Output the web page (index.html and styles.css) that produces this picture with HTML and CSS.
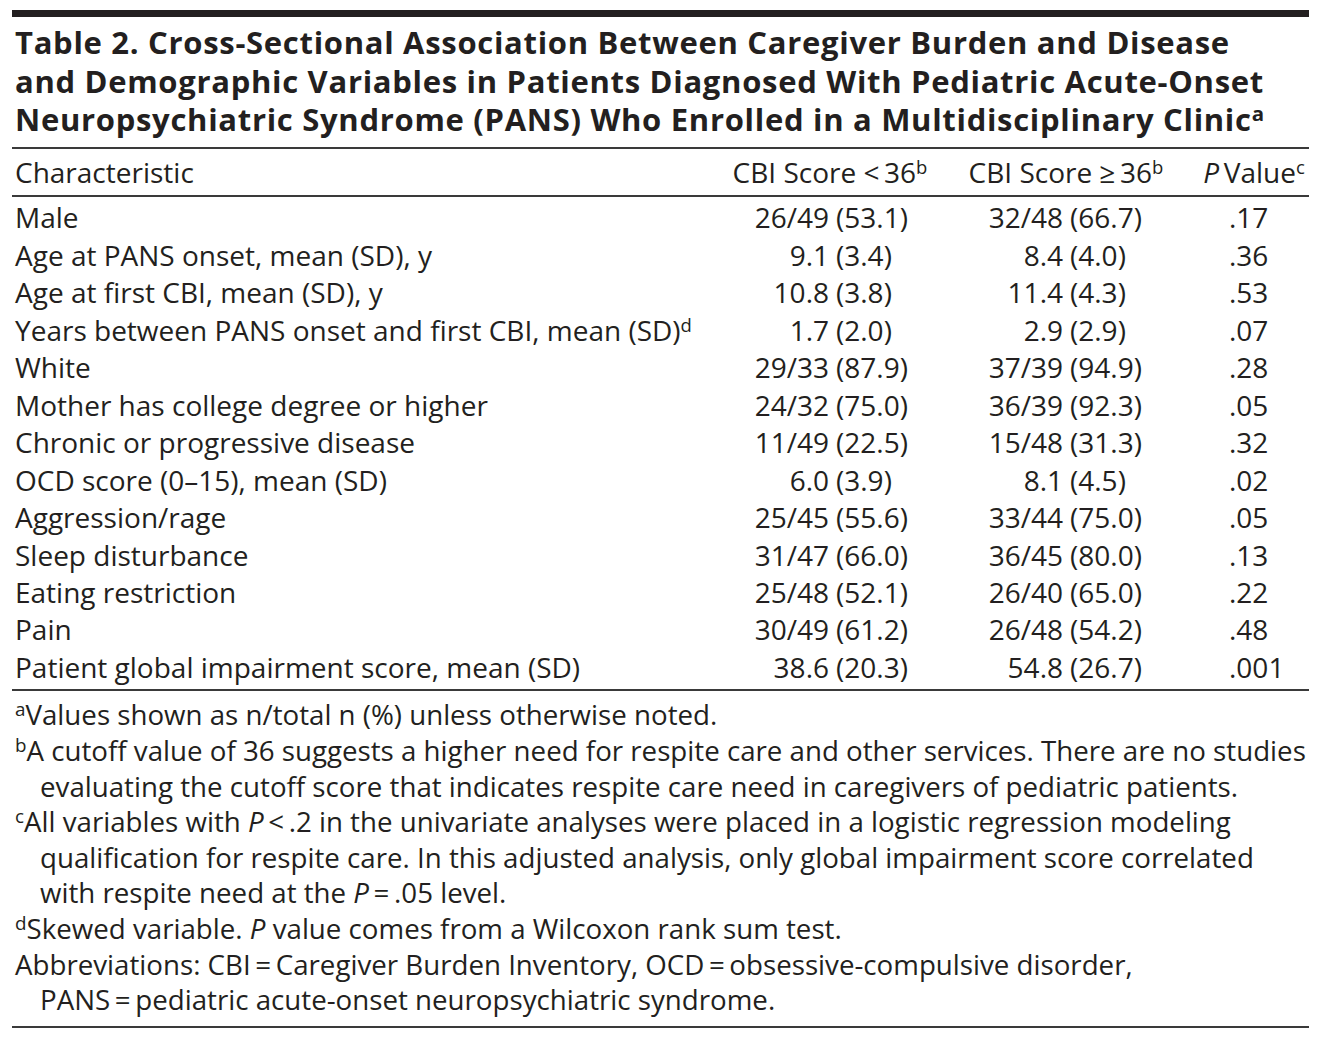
FILE: index.html
```html
<!DOCTYPE html>
<html lang="en">
<head>
<meta charset="utf-8">
<title>Table 2</title>
<link rel="stylesheet" href="styles.css">
</head>
<body>
<div class="sheet">
  <div class="topbar"></div>
  <h1 class="title">Table 2. Cross-Sectional Association Between Caregiver Burden and Disease<br>and Demographic Variables in Patients Diagnosed With Pediatric Acute-Onset<br>Neuropsychiatric Syndrome (PANS) Who Enrolled in a Multidisciplinary Clinic<sup>a</sup></h1>
  <div class="rule"></div>
  <div class="row head">
    <div class="c1">Characteristic</div>
    <div class="h2">CBI Score &lt;&#8201;36<sup>b</sup></div>
    <div class="h3">CBI Score &#8805;&#8201;36<sup>b</sup></div>
    <div class="h4"><i>P</i>&#8201;Value<sup>c</sup></div>
  </div>
  <div class="rule"></div>
  <div class="body">
    <div class="row"><div class="c1">Male</div><div class="a">26/49</div><div class="b">(53.1)</div><div class="a3">32/48</div><div class="b3">(66.7)</div><div class="p">.17</div></div>
    <div class="row"><div class="c1">Age at PANS onset, mean (SD), y</div><div class="a">9.1</div><div class="b">(3.4)</div><div class="a3">8.4</div><div class="b3">(4.0)</div><div class="p">.36</div></div>
    <div class="row"><div class="c1">Age at first CBI, mean (SD), y</div><div class="a">10.8</div><div class="b">(3.8)</div><div class="a3">11.4</div><div class="b3">(4.3)</div><div class="p">.53</div></div>
    <div class="row"><div class="c1">Years between PANS onset and first CBI, mean (SD)<sup>d</sup></div><div class="a">1.7</div><div class="b">(2.0)</div><div class="a3">2.9</div><div class="b3">(2.9)</div><div class="p">.07</div></div>
    <div class="row"><div class="c1">White</div><div class="a">29/33</div><div class="b">(87.9)</div><div class="a3">37/39</div><div class="b3">(94.9)</div><div class="p">.28</div></div>
    <div class="row"><div class="c1">Mother has college degree or higher</div><div class="a">24/32</div><div class="b">(75.0)</div><div class="a3">36/39</div><div class="b3">(92.3)</div><div class="p">.05</div></div>
    <div class="row"><div class="c1">Chronic or progressive disease</div><div class="a">11/49</div><div class="b">(22.5)</div><div class="a3">15/48</div><div class="b3">(31.3)</div><div class="p">.32</div></div>
    <div class="row"><div class="c1">OCD score (0–15), mean (SD)</div><div class="a">6.0</div><div class="b">(3.9)</div><div class="a3">8.1</div><div class="b3">(4.5)</div><div class="p">.02</div></div>
    <div class="row"><div class="c1">Aggression/rage</div><div class="a">25/45</div><div class="b">(55.6)</div><div class="a3">33/44</div><div class="b3">(75.0)</div><div class="p">.05</div></div>
    <div class="row"><div class="c1">Sleep disturbance</div><div class="a">31/47</div><div class="b">(66.0)</div><div class="a3">36/45</div><div class="b3">(80.0)</div><div class="p">.13</div></div>
    <div class="row"><div class="c1">Eating restriction</div><div class="a">25/48</div><div class="b">(52.1)</div><div class="a3">26/40</div><div class="b3">(65.0)</div><div class="p">.22</div></div>
    <div class="row"><div class="c1">Pain</div><div class="a">30/49</div><div class="b">(61.2)</div><div class="a3">26/48</div><div class="b3">(54.2)</div><div class="p">.48</div></div>
    <div class="row"><div class="c1">Patient global impairment score, mean (SD)</div><div class="a">38.6</div><div class="b">(20.3)</div><div class="a3">54.8</div><div class="b3">(26.7)</div><div class="p">.001</div></div>
  </div>
  <div class="rule"></div>
  <div class="notes">
    <p class="note"><sup>a</sup>Values shown as n/total n (%) unless otherwise noted.</p>
    <p class="note"><sup>b</sup>A cutoff value of 36 suggests a higher need for respite care and other services. There are no studies<br>evaluating the cutoff score that indicates respite care need in caregivers of pediatric patients.</p>
    <p class="note"><sup>c</sup>All variables with <i>P</i>&#8201;&lt;&#8201;.2 in the univariate analyses were placed in a logistic regression modeling<br>qualification for respite care. In this adjusted analysis, only global impairment score correlated<br>with respite need at the <i>P</i>&#8201;=&#8201;.05 level.</p>
    <p class="note"><sup>d</sup>Skewed variable. <i>P</i> value comes from a Wilcoxon rank sum test.</p>
    <p class="note">Abbreviations: CBI&#8201;=&#8201;Caregiver Burden Inventory, OCD&#8201;=&#8201;obsessive-compulsive disorder,<br>PANS&#8201;=&#8201;pediatric acute-onset neuropsychiatric syndrome.</p>
  </div>
  <div class="rule"></div>
</div>
</body>
</html>
```
FILE: styles.css
```css
html, body {
  margin: 0;
  padding: 0;
  background: #ffffff;
}

body {
  font-family: "Open Sans", "Noto Sans", sans-serif;
  color: #231f20;
}

.sheet {
  width: 1297px;
  margin-left: 12px;
  padding-top: 10px;
}

.topbar {
  height: 7px;
  background: #231f20;
}

.title {
  margin: 6px 0 0 0;
  padding: 0 0 8px 3px;
  font-size: 31px;
  font-weight: 700;
  line-height: 38.5px;
  white-space: nowrap;
  letter-spacing: 0.7px;
}

.title sup {
  font-size: 0.66em;
  line-height: 0;
  vertical-align: 0.5em;
}

.rule {
  height: 2px;
  background: #3a3a3a;
}

.row {
  display: grid;
  grid-template-columns: 708px 116px 104px 16px 114px 106px 23px 110px;
  font-size: 28px;
  line-height: 37.45px;
  white-space: nowrap;
}

.row sup {
  font-size: 0.66em;
  line-height: 0;
  vertical-align: 0.5em;
}

.head {
  padding: 5.5px 0 4px 0;
}

.head .h2 {
  grid-column: 2 / 4;
  text-align: center;
}

.head .h3 {
  grid-column: 5 / 7;
  text-align: center;
}

.head .h4 {
  grid-column: 8 / 9;
  text-align: center;
}

.body {
  padding: 2px 0 3px 0;
}

.c1 {
  grid-column: 1;
  padding-left: 3px;
}

.a {
  grid-column: 2;
  text-align: right;
  padding-right: 7px;
}

.b {
  grid-column: 3;
  text-align: left;
}

.a3 {
  grid-column: 5;
  text-align: right;
  padding-right: 7px;
}

.b3 {
  grid-column: 6;
  text-align: left;
}

.p {
  grid-column: 8;
  padding-left: 30px;
}

.notes {
  padding: 6px 0 8px 0;
}

.note {
  margin: 0;
  font-size: 27.7px;
  line-height: 35.6px;
  white-space: nowrap;
  padding-left: 28px;
  text-indent: -25px;
}

.note sup {
  font-size: 0.68em;
  line-height: 0;
  vertical-align: 0.48em;
}
```
